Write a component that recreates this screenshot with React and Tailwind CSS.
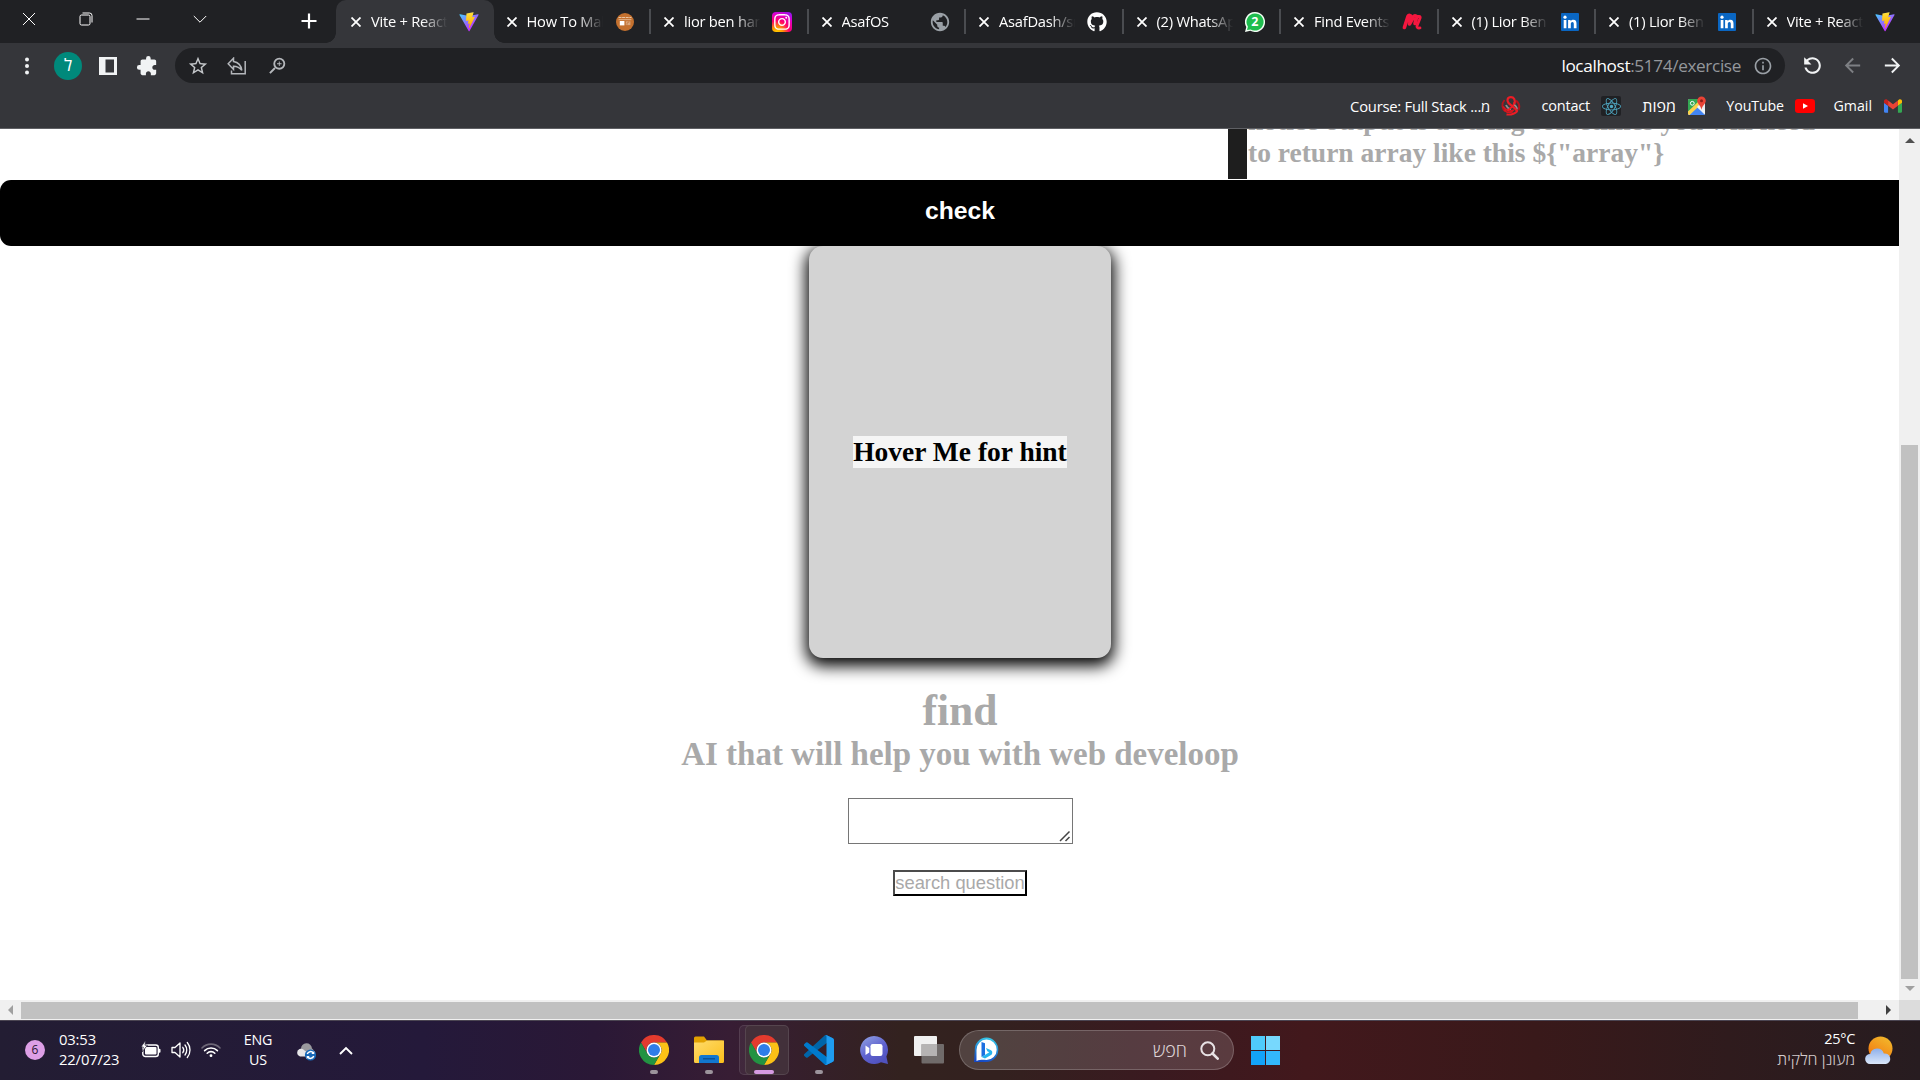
import React from "react";
import { FaGithub, FaReact, FaInstagram } from "react-icons/fa";
import {
  MdExtension,
  MdStarBorder,
  MdPublic,
  MdZoomIn,
  MdRefresh,
  MdInfoOutline,
  MdArrowBack,
  MdArrowForward,
} from "react-icons/md";

const UI = "font-['Open_Sans','DejaVu_Sans',sans-serif]";

function ViteIcon() {
  return (
    <svg viewBox="0 0 410 404" className="h-5 w-5">
      <defs>
        <linearGradient id="va" x1="6" y1="33" x2="235" y2="344" gradientUnits="userSpaceOnUse">
          <stop stopColor="#41D1FF" />
          <stop offset="1" stopColor="#BD34FE" />
        </linearGradient>
        <linearGradient id="vb" x1="194.6" y1="8.8" x2="236" y2="293" gradientUnits="userSpaceOnUse">
          <stop stopColor="#FFEA83" />
          <stop offset="0.08" stopColor="#FFDD35" />
          <stop offset="1" stopColor="#FFA800" />
        </linearGradient>
      </defs>
      <path fill="url(#va)" d="M399.641 59.5246L215.643 388.545C211.844 395.338 202.084 395.378 198.228 388.618L10.5817 59.5563C6.38087 52.1896 12.6802 43.2665 21.0281 44.7586L205.223 77.6824C206.398 77.8924 207.601 77.8904 208.776 77.6763L389.119 44.8058C397.439 43.2894 403.768 52.1434 399.641 59.5246Z" />
      <path fill="url(#vb)" d="M292.965 1.5744L156.801 28.2552C154.563 28.6937 152.906 30.5903 152.771 32.8664L144.395 174.33C144.198 177.662 147.258 180.248 150.51 179.498L188.42 170.749C191.967 169.931 195.172 173.055 194.443 176.622L183.18 231.775C182.422 235.487 185.907 238.661 189.532 237.56L212.947 230.446C216.577 229.344 220.065 232.527 219.297 236.242L201.398 322.875C200.278 328.294 207.486 331.249 210.492 326.603L212.5 323.5L323.454 102.072C325.312 98.3645 322.108 94.137 318.036 94.9228L279.014 102.454C275.347 103.161 272.227 99.746 273.262 96.1583L298.731 7.86689C299.767 4.27314 296.636 0.855181 292.965 1.5744Z" />
    </svg>
  );
}

function CourseIcon() {
  return (
    <svg viewBox="0 0 18 18" className="h-[18px] w-[18px]">
      <circle cx="9" cy="9" r="9" fill="#c4712f" />
      <path d="M2.5 4.5h13" stroke="#e9c6a6" strokeWidth="1" strokeDasharray="3 .6" />
      <rect x="2.6" y="6" width="12.8" height="1.2" fill="#dba77c" />
      <rect x="3.8" y="8" width="4.6" height="4.4" fill="#fff" />
      <path d="M9.8 8.3h4.6v3.8H9.8z" fill="#dba77c" />
      <path d="M11 12V10h1v-1h1.4" stroke="#c4712f" strokeWidth=".6" fill="none" />
    </svg>
  );
}

function InstaIcon() {
  return (
    <span className="flex h-5 w-5 items-center justify-center rounded-[4px] bg-[radial-gradient(circle_at_25%_105%,#ffd600_0%,#ff9a00_22%,#ff0069_48%,#e000c8_72%,#7a1cff_100%)]">
      <FaInstagram size={18} color="#fff" />
    </span>
  );
}

function WhatsIcon() {
  return (
    <svg viewBox="0 0 20 20" className="h-5 w-5">
      <path d="M10 0a10 10 0 1 1-4.7 18.8L0 20l1.3-5A10 10 0 0 1 10 0z" fill="#f3fff5" />
      <path d="M10 1.4a8.6 8.6 0 1 1-4.4 16L2 18.1l.9-3.4A8.6 8.6 0 0 1 10 1.4z" fill="#1ebd4e" />
      <text x="9.8" y="14.4" textAnchor="middle" fontSize="12.5" fontWeight="700" fill="#fff" fontFamily="Open Sans">2</text>
    </svg>
  );
}

function MeetupIcon() {
  return (
    <svg viewBox="0 0 20 18" className="h-[18px] w-5" fill="none" stroke="#f5173f" strokeLinecap="round" strokeLinejoin="round">
      <path d="M2.400 14.500L6 3.400c.8-1.600 3-1.200 3 .6L7.600 11l4-7.200c1-1.600 3.200-1 2.900.8L13 10.500" strokeWidth="3.600" />
      <path d="M14 3.500h3.200c.9 0 1.200.7.9 1.500l-3 7.500c-.6 1.700.4 2.900 2.900 2.400" strokeWidth="2.800" />
    </svg>
  );
}

function LinkedIcon() {
  return (
    <svg viewBox="0 0 18 18" className="h-[18px] w-[18px]">
      <rect width="18" height="18" rx="1" fill="#0a66c2" />
      <circle cx="4" cy="4.2" r="1.6" fill="#fff" />
      <path d="M2.7 7h2.7v8.3H2.7zM7.1 7h2.5v1.2c.5-.8 1.400-1.400 2.700-1.400 2.500 0 3.200 1.600 3.200 3.900v4.600h-2.700v-4.100c0-1.200-.2-2.200-1.400-2.200s-1.600 1-1.600 2.100v4.200H7.100z" fill="#fff" />
    </svg>
  );
}

const tabs = [
  { title: "Vite + React", icon: <ViteIcon />, active: true },
  { title: "How To Make", icon: <CourseIcon /> },
  { title: "lior ben hamo", icon: <InstaIcon /> },
  { title: "AsafOS", icon: <MdPublic size={22} color="#9aa0a6" /> },
  { title: "AsafDash/src", icon: <FaGithub size={20} color="#fff" /> },
  { title: "(2) WhatsApp", icon: <WhatsIcon /> },
  { title: "Find Events", icon: <MeetupIcon /> },
  { title: "(1) Lior Ben", icon: <LinkedIcon /> },
  { title: "(1) Lior Ben", icon: <LinkedIcon /> },
  { title: "Vite + React", icon: <ViteIcon /> },
];

function Tab({ title, icon, active, divider, className }) {
  return (
    <div
      className={`relative flex h-[43px] w-[157.5px] shrink-0 items-center pl-[15px] ${className} ${
        active ? "rounded-t-[10px] bg-[#35363a]" : ""
      }`}
    >
      {divider && <span className="absolute top-[9px] left-0 h-[25px] w-[2px] bg-[#4a4c50]" />}
      {active && (
        <>
          <span className="absolute bottom-0 -left-[10px] h-[10px] w-[10px] bg-[radial-gradient(circle_at_0_0,transparent_9.5px,#35363a_10px)]" />
          <span className="absolute -right-[10px] bottom-0 h-[10px] w-[10px] bg-[radial-gradient(circle_at_100%_0,transparent_9.5px,#35363a_10px)]" />
        </>
      )}
      <svg viewBox="0 0 10 10" className="h-[10px] w-[10px] shrink-0">
        <path d="M.5.5l9 9M9.500.5l-9 9" stroke="#fff" strokeWidth="1.8" />
      </svg>
      <span className="ml-[10px] w-[77px] overflow-hidden pb-[2px] text-[14.700px] leading-5 tracking-[-0.25px] whitespace-nowrap text-white [mask-image:linear-gradient(to_right,#000_66%,transparent_99%)]">
        {title}
      </span>
      <span className="ml-[9px] flex w-[24px] justify-center">{icon}</span>
    </div>
  );
}

function TabStrip() {
  return (
    <div className="flex h-[43px] w-full shrink-0 bg-[#202124]">
      <div className="flex h-[37px] w-[228px] shrink-0 items-center">
        {[
          <path key="c" d="M1 1l12 12M13 1L1 13" />,
          <g key="r">
            <rect x="1" y="3" width="10" height="10" rx="1.5" />
            <path d="M3.500 1h7A2.500 2.500 0 0 1 13 3.500v7" />
          </g>,
          <path key="m" d="M.5 7h13" />,
          <path key="v" d="M.8 4L7 10.200 13.200 4" />,
        ].map((p, i) => (
          <span key={i} className="flex w-[57px] justify-center">
            <svg viewBox="0 0 14 14" className="h-[14px] w-[14px]" fill="none" stroke="#fff" strokeWidth="1">
              {p}
            </svg>
          </span>
        ))}
      </div>
      <div className="flex h-[42px] w-[108px] shrink-0 items-center justify-end pr-[19px]">
        <svg viewBox="0 0 16 16" className="h-4 w-4">
          <path d="M8 .5v15M.5 8h15" stroke="#fff" strokeWidth="2.200" />
        </svg>
      </div>
      {tabs.map((t, i) => (
        <Tab key={i} {...t} divider={i > 1} className={i === 1 ? "-ml-[2px]" : ""} />
      ))}
    </div>
  );
}

function Toolbar() {
  return (
    <div className="flex h-[45px] w-full shrink-0 items-center bg-[#35363a]">
      <svg viewBox="0 0 4 18" className="ml-[25px] h-[18px] w-1">
        <circle cx="2" cy="2.500" r="2" fill="#f1f3f4" />
        <circle cx="2" cy="9" r="2" fill="#f1f3f4" />
        <circle cx="2" cy="15.500" r="2" fill="#f1f3f4" />
      </svg>
      <span className="ml-[25px] flex h-[28px] w-[28px] items-center justify-center rounded-full bg-[#00897b] pb-[2px] text-[17px] leading-none text-white">
        ל
      </span>
      <svg viewBox="0 0 18 18" className="ml-[17px] h-[18px] w-[18px]">
        <rect width="18" height="18" fill="#f1f3f4" />
        <rect x="6.500" y="2.500" width="8.500" height="13" fill="#35363a" />
      </svg>
      <MdExtension size={22} color="#f1f3f4" className="ml-[19px] -scale-x-100" />
      <div className="ml-[17px] flex h-[35px] w-[1610px] items-center rounded-full bg-[#202124] pr-3 pl-[12px]">
        <MdStarBorder size={22} color="#c4c7ca" />
        <svg viewBox="0 0 20 18" className="ml-[18px] h-[18px] w-5" fill="none" stroke="#b4b7bb" strokeWidth="1.500">
          <path d="M18.200 4v12.700H4.500v-3.200" />
          <path d="M6.500 1.200L1.200 6.800l5.300 5.600V9.200c3.800 0 6.200 1.200 8.300 4.200-.6-4.600-3-8-8.300-8.900z" />
        </svg>
        <MdZoomIn size={22} color="#b4b7bb" className="ml-[19px] -scale-x-100" />
        <span className="ml-auto text-[17.200px] leading-6 tracking-[-0.36px] text-[#94979b]">
          <span className="text-white">localhost</span>:5174/exercise
        </span>
        <MdInfoOutline size={20} color="#9aa0a6" className="ml-[12px]" />
      </div>
      <MdRefresh size={25} color="#f1f3f4" className="ml-[15px] -scale-x-100" />
      <MdArrowBack size={23} color="#7d7f83" className="ml-[16px]" />
      <MdArrowForward size={23} color="#f1f3f4" className="ml-[17px]" />
    </div>
  );
}

function GmailIcon() {
  return (
    <svg viewBox="52 42 88 66" className="h-[14px] w-[18px]">
      <path fill="#4285f4" d="M58 108h14V74L52 59v43c0 3.320 2.690 6 6 6" />
      <path fill="#34a853" d="M120 108h14c3.320 0 6-2.690 6-6V59l-20 15" />
      <path fill="#fbbc04" d="M120 48v26l20-15v-8c0-7.420-8.470-11.650-14.400-7.200" />
      <path fill="#ea4335" d="M72 74V48l24 18 24-18v26L96 92" />
      <path fill="#c5221f" d="M52 51v8l20 15V48l-5.600-4.200c-5.940-4.450-14.400-.22-14.400 7.200" />
    </svg>
  );
}

function MapsIcon() {
  return (
    <svg viewBox="0 0 20 20" className="h-5 w-5">
      <rect x="1" y="3" width="17" height="16" rx="1.500" fill="#e8eaed" />
      <path d="M1 16V4.500A1.500 1.500 0 0 1 2.500 3H13l-1 4z" fill="#34a853" />
      <path d="M2.500 19L10 11l8 8z" fill="#4285f4" />
      <path d="M1 15.500L12.500 4.500l3 2.500L2.500 19 1 18z" fill="#fbd14b" />
      <path d="M10 11l2.500-2.500L18 14v4z" fill="#f1f3f4" />
      <circle cx="5.300" cy="7.300" r="1.900" fill="none" stroke="#fff" strokeWidth="1" />
      <path d="M14.500.5a4.300 4.300 0 0 1 4.300 4.300c0 3-3.500 4.500-4.300 9-.8-4.500-4.300-6-4.300-9A4.300 4.300 0 0 1 14.500.5z" fill="#ea4335" />
      <circle cx="14.500" cy="4.700" r="1.500" fill="#8c1d18" />
    </svg>
  );
}

function RibbonIcon() {
  return (
    <svg viewBox="0 0 20 20" className="h-5 w-5" fill="none">
      <path d="M3.500 4C0 8 1 13 4.500 15.500" stroke="#b5141c" strokeWidth="1.800" />
      <path d="M15 4.500c3 2.500 4 6 2.500 9.500" stroke="#b5141c" strokeWidth="2" />
      <path d="M12.500 8.500c2 1 3.500 2.500 3.500 5M5 9c1 2.500 3 4 5 4.500" stroke="#9a8b8d" strokeWidth="1.800" />
      <path d="M2 10.500c2.500 4 7 5.500 11 3.500M3 14c2.500 2.500 6 3 9 1.500" stroke="#d8161f" strokeWidth="1.500" />
      <path d="M13.500 8C14.500 4 13 1.200 9.800 1.200 6.500 1.200 5.500 4.500 7.500 7c2.200 2.700 6.500 4 9 8.500" stroke="#ee1c25" strokeWidth="2.200" />
      <path d="M13.500 6c-.5 4-4 6.500-7 8.500M5.500 18.500c4 .5 8-.5 11-3.500" stroke="#ee1c25" strokeWidth="1.900" />
    </svg>
  );
}

function Bookmark({ label, icon, className, textClass = "text-[14px]" }) {
  return (
    <div className={`flex items-center justify-end ${className}`}>
      <span dir="ltr" className={`leading-5 whitespace-nowrap text-white ${textClass}`}>{label}</span>
      <span className="ml-[10px] flex w-[22px] justify-center">{icon}</span>
    </div>
  );
}

function BookmarksBar() {
  return (
    <div className="flex h-[41px] w-full shrink-0 items-center justify-end border-b border-[#5f6064] bg-[#35363a] pr-4 pb-[4px]">
      <Bookmark
        label={<>Course: Full Stack ...<bdi>מ</bdi></>}
        className="w-[180px]"
        textClass="text-[14.800px] tracking-[-0.250px]"
        icon={<RibbonIcon />}
      />
      <Bookmark
        label="contact"
        className="w-[100px]"
        textClass="text-[14.500px] tracking-[-0.200px]"
        icon={
          <span className="flex h-5 w-5 items-center justify-center rounded-[2px] bg-[#202124]">
            <FaReact size={19} color="#4fa9c4" />
          </span>
        }
      />
      <Bookmark label="מפות" className="w-[86px]" textClass="text-[16px]" icon={<MapsIcon />} />
      <Bookmark
        label="YouTube"
        className="w-[108px]"
        textClass="text-[14.200px] tracking-[-0.100px]"
        icon={
          <svg viewBox="0 0 20 14" className="h-[14px] w-5">
            <rect width="20" height="14" rx="3.200" fill="#f00" />
            <path d="M8 4.200l5 2.800-5 2.800z" fill="#fff" />
          </svg>
        }
      />
      <Bookmark label="Gmail" className="w-[88px]" textClass="text-[14.200px]" icon={<GmailIcon />} />
    </div>
  );
}

function PageContent() {
  return (
    <main className="flex h-[871px] w-[1899px] flex-col overflow-hidden bg-white font-['Liberation_Serif',serif] font-bold text-[#a9a9a9]">
      <div className="flex h-[51px] shrink-0 items-start">
        <div className="ml-[1228px] h-[50px] w-[19px] bg-[#1e1e1e]" />
        <p className="-mt-[24px] ml-px w-[580px] text-[27.500px] leading-[32px]">
          notice output is a string sometimes you will need to return array like this {'${"array"}'}
        </p>
      </div>
      <button className="relative z-10 h-[66px] w-full shrink-0 rounded-l-[11px] bg-black pb-[5px] pl-[21px] font-['Liberation_Sans',sans-serif] text-[24.750px] font-bold text-white">
        check
      </button>
      <div className="flex w-[1920px] flex-col items-center">
        <div className="flex h-[412px] w-[302px] items-center justify-center rounded-[14px] bg-[#d3d3d3] shadow-[0_5px_16px_3px_#000]">
          <h3 className="bg-[#f5f5f5] text-[27.500px] leading-[32px] whitespace-nowrap text-black">Hover Me for hint</h3>
        </div>
        <h1 className="mt-[27px] text-[43.500px] leading-[50px]">find</h1>
        <h2 className="text-[33px] leading-[38px] tracking-[-0.020px]">AI that will help you with web develoop</h2>
        <div className="mt-[25px] flex h-[46px] w-[225px] items-end justify-end border border-[#767676] bg-white">
          <svg viewBox="0 0 12 12" className="mr-[1px] mb-[1px] h-3 w-3">
            <path d="M1 11L10.500 1.500M6.500 11l4-4" stroke="#444" strokeWidth="1.500" />
          </svg>
        </div>
        <button className="mt-[26px] h-[26px] w-[134px] border-2 border-t-[#4c4c4c] border-r-black border-b-black border-l-[#4c4c4c] bg-white font-['Liberation_Sans',sans-serif] text-[18.330px] leading-[22px] font-normal whitespace-nowrap">
          search question
        </button>
      </div>
    </main>
  );
}

function VerticalScrollbar() {
  return (
    <div className="flex h-[871px] w-[21px] flex-col items-center bg-[#f0f0f0]">
      <svg viewBox="0 0 10 5" className="mt-[9px] h-[5px] w-[10px]"><path d="M0 5l5-5 5 5z" fill="#505050" /></svg>
      <div className="mt-[302px] h-[534px] w-[17px] bg-[#c1c1c1]" />
      <svg viewBox="0 0 10 5" className="mt-[7px] h-[5px] w-[10px]"><path d="M0 0l5 5 5-5z" fill="#a0a0a0" /></svg>
    </div>
  );
}

function HorizontalScrollbar() {
  return (
    <div className="flex h-5 w-full shrink-0 items-center bg-[#f0f0f0]">
      <svg viewBox="0 0 5 10" className="ml-[8px] h-[10px] w-[5px]"><path d="M5 0L0 5l5 5z" fill="#a0a0a0" /></svg>
      <div className="ml-[8px] h-[17px] w-[1837px] bg-[#c1c1c1]" />
      <svg viewBox="0 0 5 10" className="ml-[28px] h-[10px] w-[5px]"><path d="M0 0l5 5-5 5z" fill="#404040" /></svg>
      <div className="ml-auto h-5 w-[21px] bg-[#dcdcdc]" />
    </div>
  );
}

function ChromeIcon() {
  return (
    <svg viewBox="0 0 48 48" className="h-[30px] w-[30px]">
      <path fill="#e33b2e" d="M24 12h20.800A24 24 0 0 0 3.200 12l10.400 18A12 12 0 0 1 24 12z" />
      <path fill="#fbc116" d="M44.800 12H24a12 12 0 0 1 10.400 18L24 48A24 24 0 0 0 44.800 12z" />
      <path fill="#229342" d="M34.400 30L24 48A24 24 0 0 1 3.200 12l10.400 18a12 12 0 0 0 20.800 0z" />
      <circle cx="24" cy="24" r="12" fill="#fff" />
      <circle cx="24" cy="24" r="9.600" fill="#2f7de9" />
    </svg>
  );
}

function ExplorerIcon() {
  return (
    <svg viewBox="0 0 30 28" className="h-[28px] w-[30px]">
      <defs>
        <linearGradient id="ex" x1="0" y1="0" x2="1" y2="1">
          <stop stopColor="#ffdb6b" />
          <stop offset="1" stopColor="#fbbf1b" />
        </linearGradient>
      </defs>
      <path d="M0 2A1.500 1.500 0 0 1 1.500.5H10l3 4H28a2 2 0 0 1 2 2V10H0z" fill="#e2a100" />
      <path d="M0 6.500h10l3-2h17V25.500a1.500 1.500 0 0 1-1.500 1.500h-27A1.500 1.500 0 0 1 0 25.500z" fill="url(#ex)" />
      <path d="M5 27v-5.500A2.500 2.500 0 0 1 7.500 19h15a2.500 2.500 0 0 1 2.500 2.500V27z" fill="#1277cf" />
      <path d="M9 22.800h12" stroke="#0b4a8a" strokeWidth="1.200" />
    </svg>
  );
}

function CodeIcon() {
  return (
    <svg viewBox="0 0 100 100" className="h-[30px] w-[30px]">
      <path fill="#0065a9" d="M96.461 10.796L75.857.876a6.230 6.230 0 0 0-7.107 1.207L1.299 63.583a4.170 4.170 0 0 0 .004 6.162l5.510 5.009a4.170 4.170 0 0 0 5.321.237l81.227-61.621c2.725-2.067 6.639-.124 6.639 3.297v-.240c0-2.401-1.375-4.590-3.539-5.631z" />
      <path fill="#007acc" d="M96.461 89.204l-20.604 9.920a6.230 6.230 0 0 1-7.107-1.207L1.299 36.417a4.170 4.170 0 0 1 .004-6.162l5.510-5.009a4.170 4.170 0 0 1 5.321-.237l81.227 61.621c2.725 2.067 6.639.124 6.639-3.297v.240c0 2.401-1.375 4.590-3.539 5.631z" />
      <path fill="#1f9cf0" d="M75.858 99.126a6.230 6.230 0 0 1-7.108-1.209c2.306 2.306 6.250.673 6.250-2.589V4.672c0-3.262-3.944-4.895-6.250-2.589A6.230 6.230 0 0 1 75.858.874l20.600 9.907A6.250 6.250 0 0 1 100 16.413v67.174a6.250 6.250 0 0 1-3.541 5.633z" />
    </svg>
  );
}

function ChatIcon() {
  return (
    <svg viewBox="0 0 28 28" className="h-[28px] w-[28px]">
      <defs>
        <linearGradient id="ch" x1="0" y1="0" x2=".6" y2="1">
          <stop stopColor="#93a5e4" />
          <stop offset=".6" stopColor="#5f62cf" />
          <stop offset="1" stopColor="#5052be" />
        </linearGradient>
      </defs>
      <path d="M14 0a14 14 0 0 1 12.400 20.500L28 28l-7-1.800A14 14 0 1 1 14 0z" fill="url(#ch)" />
      <rect x="10.500" y="8" width="12" height="12" rx="2.200" fill="#fff" />
      <path d="M5.500 9.500l3.800 2.500v4.500l-3.800 2.500z" fill="#fff" />
    </svg>
  );
}

function TaskViewIcon() {
  return (
    <svg viewBox="0 0 30 28" className="h-[28px] w-[30px]">
      <rect x="0" y="0" width="23" height="20" rx="1" fill="#f0f0f0" />
      <rect x="7.500" y="8" width="22.500" height="19.500" rx="1" fill="#7b7878" fillOpacity=".85" />
      <path d="M7.500 8H23v12H7.500z" fill="#b5b3b3" />
    </svg>
  );
}

const apps = [
  { icon: <ChromeIcon />, mark: "dot" },
  { icon: <ExplorerIcon />, mark: "dot" },
  { icon: <ChromeIcon />, mark: "active" },
  { icon: <CodeIcon />, mark: "dot" },
  { icon: <ChatIcon /> },
  { icon: <TaskViewIcon /> },
];

function AppSlot({ icon, mark }) {
  const active = mark === "active";
  return (
    <div className="relative flex h-[50px] w-[55px] items-center justify-center">
      {active && (
        <>
          <span className="absolute top-0 left-[3px] h-[50px] w-[30px] rounded-[5px] border border-white/10 bg-white/5" />
          <span className="absolute top-0 left-[9px] h-[50px] w-[44px] rounded-[5px] border border-white/10 bg-[#42303a]" />
        </>
      )}
      <span className="relative">{icon}</span>
      {mark && (
        <span
          className={`absolute bottom-[1px] h-[4px] rounded-full ${active ? "w-5 bg-[#d79be3]" : "w-2 bg-[#9c949c]"}`}
        />
      )}
    </div>
  );
}

function Tray() {
  return (
    <div className="flex h-full w-[626px] items-center text-white">
      <span className="ml-[25px] flex h-5 w-5 items-center justify-center rounded-full bg-[#dd9fe6] text-[12px] text-[#2a1530]">6</span>
      <div className="ml-[14px] w-[62px] pb-[2px] text-[14.800px] leading-5 tracking-[-0.150px] whitespace-nowrap">
        <div>03:53</div>
        <div>22/07/23</div>
      </div>
      <svg viewBox="0 0 20 18" className="ml-[20px] h-[18px] w-5">
        <rect x="1.800" y="4" width="15.500" height="11.500" rx="2.500" fill="none" stroke="#fff" strokeWidth="1.400" />
        <rect x="4" y="6" width="11.500" height="7.500" rx="1" fill="#fff" />
        <path d="M17.500 7.800h1a1 1 0 0 1 1 1v2a1 1 0 0 1-1 1h-1z" fill="#fff" />
        <path d="M4.500-.5L0 6h2.300L1 11l5.500-6.800H4z" fill="#fff" stroke="#231d33" strokeWidth=".7" />
      </svg>
      <svg viewBox="0 0 20 18" className="ml-[10px] h-[18px] w-5" fill="none" stroke="#fff" strokeWidth="1.300" strokeLinecap="round">
        <path d="M1 6.500h3L9 2v14l-5-4.500H1z" strokeLinejoin="round" />
        <path d="M11.800 6.300c1.200 1.600 1.200 3.800 0 5.400M14 4c2.300 2.800 2.300 7.200 0 10M16.300 1.500c3.600 4.300 3.600 10.700 0 15" />
      </svg>
      <svg viewBox="0 0 20 16" className="ml-[10px] h-4 w-5" fill="none" stroke="#fff" strokeWidth="1.600" strokeLinecap="round">
        <path d="M1 6a12.500 12.500 0 0 1 18 0" stroke="#6d6777" />
        <path d="M3.600 8.600a9 9 0 0 1 12.800 0M6.200 11.200a5.400 5.400 0 0 1 7.600 0" />
        <circle cx="10" cy="13.700" r="1.400" fill="#fff" stroke="none" />
      </svg>
      <div className="ml-[20px] w-[34px] text-center text-[14.300px] leading-5 tracking-[-0.200px]">
        <div>ENG</div>
        <div>US</div>
      </div>
      <svg viewBox="0 0 20 18" className="ml-[21px] mt-[4px] h-[18px] w-5">
        <path d="M5 6a5.500 5.500 0 0 1 11-.5c1.500 1 2 2 2 4L8 11z" fill="#9a9a9e" />
        <path d="M4 13.500A4 4 0 0 1 3.500 6C6 5 8 6.500 9 8l6 2v3.500z" fill="#e6e6e8" />
        <circle cx="14.500" cy="12" r="5.600" fill="#1768b8" />
        <path d="M11.300 11a3.400 3.400 0 0 1 6-1M17.700 13a3.400 3.400 0 0 1-6 1" fill="none" stroke="#fff" strokeWidth="1.500" />
        <path d="M18.300 8v3h-3zM10.700 16v-3h3z" fill="#fff" />
      </svg>
      <svg viewBox="0 0 14 9" className="ml-[23px] h-[9px] w-[14px]">
        <path d="M1 8l6-6 6 6" fill="none" stroke="#fff" strokeWidth="1.900" />
      </svg>
    </div>
  );
}

function BingIcon() {
  return (
    <svg viewBox="0 0 26 26" className="h-[26px] w-[26px]">
      <defs>
        <linearGradient id="bg" x1=".6" y1="0" x2=".4" y2="1">
          <stop stopColor="#35c8e8" />
          <stop offset="1" stopColor="#1749c4" />
        </linearGradient>
      </defs>
      <path d="M13.500.5a12 12 0 1 1-1 24.500H1l.8-11.500A12 12 0 0 1 13.500.5z" fill="url(#bg)" />
      <path d="M13.500 2.500a10.200 10.200 0 0 1 0 20.400c-4 0-6-.4-10 1V13A10.200 10.200 0 0 1 13.500 2.500z" fill="#fff" />
      <path d="M8.500 5l3.500 1.300V18l-3.500 2z" fill="#1c6fe0" />
      <path d="M8.500 20l3.500 1.500 6.500-3.800c1.500-2 .8-4-1-4.700L13 11l1.300 3.300 2 1z" fill="#27b4ee" />
    </svg>
  );
}

function Taskbar() {
  return (
    <div className="flex h-[60px] w-full shrink-0 items-center border-t border-[#4b4552] bg-[linear-gradient(90deg,#231d33_0%,#24193a_22%,#2a1836_31%,#371d34_38%,#33221f_47%,#33211f_52%,#3a1a20_60%,#42181c_68%,#39191a_80%,#2f1b1d_90%,#271c20_100%)] pb-px">
      <Tray />
      <div className="flex">
        {apps.map((a, i) => (
          <AppSlot key={i} {...a} />
        ))}
      </div>
      <div className="ml-[3px] flex h-[40px] w-[275px] items-center rounded-full border border-white/20 bg-white/15 pr-[14px] pl-[13px]">
        <BingIcon />
        <span className="ml-auto text-[18px] leading-5 font-light text-[#ddd3d6]">חפש</span>
        <svg viewBox="0 0 19 19" className="ml-[13px] h-[19px] w-[19px]" fill="none">
          <circle cx="7.800" cy="7.800" r="6.500" stroke="#e8e2e4" strokeWidth="2" />
          <path d="M12.500 12.500l5.200 5.200" stroke="#e8e2e4" strokeWidth="2.600" strokeLinecap="round" />
        </svg>
      </div>
      <div className="ml-[17px] grid h-[29px] w-[29px] grid-cols-2 gap-px">
        <span className="bg-[#4fcbfb]" />
        <span className="bg-[#77d8fd]" />
        <span className="bg-[#13a3f8]" />
        <span className="bg-[#33b8fb]" />
      </div>
      <div className="ml-auto pb-[2px] text-right leading-5 whitespace-nowrap">
        <div className="text-[14.500px] leading-5 tracking-[-0.300px] text-white">25°C</div>
        <div dir="rtl" className="text-[16px] leading-5 font-light text-[#d3cacb]">מעונן חלקית</div>
      </div>
      <svg viewBox="0 0 28 28" className="mr-[27px] ml-[10px] h-[28px] w-[28px]">
        <defs>
          <linearGradient id="sun" x1=".8" y1="0" x2=".2" y2="1">
            <stop stopColor="#f2b92b" />
            <stop offset="1" stopColor="#f3740f" />
          </linearGradient>
          <linearGradient id="cl" x1="0" y1="0" x2="0" y2="1">
            <stop stopColor="#8fb0ea" />
            <stop offset="1" stopColor="#dbe7fa" />
          </linearGradient>
        </defs>
        <circle cx="15.500" cy="12.500" r="12" fill="url(#sun)" />
        <path d="M5 28a5 5 0 0 1 .3-10 7 7 0 0 1 13.500-.5A5.300 5.300 0 0 1 21 28z" fill="url(#cl)" />
      </svg>
    </div>
  );
}

export default function App() {
  return (
    <div className={`flex h-[1080px] w-[1920px] flex-col overflow-hidden ${UI}`}>
      <TabStrip />
      <Toolbar />
      <BookmarksBar />
      <div className="flex shrink-0">
        <PageContent />
        <VerticalScrollbar />
      </div>
      <HorizontalScrollbar />
      <Taskbar />
    </div>
  );
}
